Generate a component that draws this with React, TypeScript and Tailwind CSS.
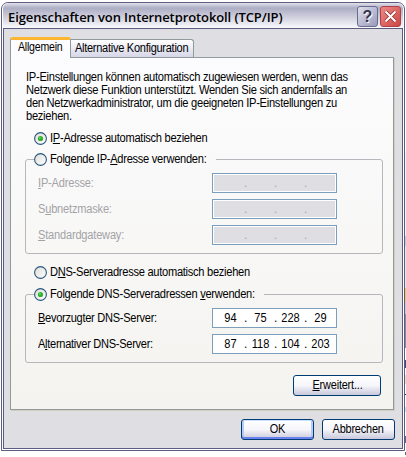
import type { ReactNode } from "react";

function Radio({ checked = false }: { checked?: boolean }) {
  return (
    <svg width="13" height="13" viewBox="0 0 13 13" className="shrink-0">
      <defs>
        <linearGradient id="radioFace" x1="0" y1="0" x2="1" y2="1">
          <stop offset="0" stopColor="#dcdcd7" />
          <stop offset="1" stopColor="#ffffff" />
        </linearGradient>
      </defs>
      <circle cx="6.5" cy="6.5" r="5.9" fill="url(#radioFace)" stroke="#2a567f" strokeWidth="1.1" />
      {checked && <circle cx="6.5" cy="6.5" r="2.6" fill="#2fb02c" />}
      {checked && <circle cx="5.9" cy="5.9" r="0.9" fill="#6bdc63" />}
    </svg>
  );
}

function Option({ checked, className = "", children }: { checked?: boolean; className?: string; children: ReactNode }) {
  return (
    <div className={`flex h-[15px] items-center gap-[3px] ${className}`}>
      <Radio checked={checked} />
      <span className="origin-left scale-x-[0.925]">{children}</span>
    </div>
  );
}

function U({ children }: { children: ReactNode }) {
  return <span className="underline decoration-1 underline-offset-[1px] [text-decoration-skip-ink:none]">{children}</span>;
}

function Address({ parts, disabled }: { parts?: string[]; disabled?: boolean }) {
  const values = parts ?? ["", "", "", ""];
  return (
    <div className={`h-5 w-[125px] border border-[#7b9ebd] bg-white p-px ${disabled ? "text-[#a9a0a8]" : "text-black"}`}>
      <div className={`flex h-full items-center pl-[3px] tracking-normal ${disabled ? "bg-[#dfdfe3]" : ""}`}>
        {values.map((v, i) => (
          <span key={i} className="flex">
            <span className="w-[27px] scale-x-[0.92] text-center">{v}</span>
            {i < 3 && <span className="w-[3px]">.</span>}
          </span>
        ))}
      </div>
    </div>
  );
}

function Row({ label, children }: { label: ReactNode; children: ReactNode }) {
  return (
    <div className="flex h-5 items-center">
      <span className="w-[174px] origin-left">
        <span className="inline-block origin-left scale-x-[0.92]">{label}</span>
      </span>
      {children}
    </div>
  );
}

function Button({ className = "", children }: { className?: string; children: ReactNode }) {
  return (
    <button className={`h-[21px] rounded-[3px] border border-[#003c74] bg-linear-to-b from-white via-[#f6f6fb] to-[#c9c9dc] leading-[19px] tracking-[-0.2px] ${className}`}>
      <span className="inline-block scale-x-[0.91]">{children}</span>
    </button>
  );
}

function DesktopEdge() {
  return (
    <div className="flex w-px flex-col pt-[152px]">
      <div className="h-[84px] bg-[#f4f4f8]" />
      <div className="h-[10px] bg-[#b8cce6]" />
      <div className="h-[42px] bg-[#e8e8ec]" />
      <div className="h-[14px] bg-[#f2c94c]" />
      <div className="h-[12px] bg-[#c8c8d8]" />
      <div className="h-[34px] bg-[#8a8aa8]" />
      <div className="mt-[12px] h-[8px] bg-[#4c4474]" />
      <div className="mt-[7px] h-[9px] bg-[#ecdcae]" />
      <div className="mt-[10px] h-px bg-[#303048]" />
      <div className="mt-[12px] h-[5px] bg-[#b4e4f0]" />
      <div className="mt-[24px] h-[7px] bg-[#6860a0]" />
      <div className="mt-[9px] h-[3px] bg-[#666680]" />
    </div>
  );
}

export default function App() {
  return (
    <div className="flex h-[457px] w-[406px] overflow-hidden bg-white pl-px font-['Liberation_Sans',Arial,sans-serif] text-[12px] leading-[13px] whitespace-nowrap text-black">
      <div className="mt-0.5 flex h-[449px] w-[404px] flex-col rounded-t-[7px] border border-[#5c5c80] bg-white px-px pb-px">
        <header className="flex h-[25px] shrink-0 rounded-t-[6px] bg-linear-to-b from-[#e2e2ec] via-[#adadc4] via-20% to-[#fafafd] pt-[3px] pl-[5px] pr-0.5">
          <h1 className="grow pt-[5px] font-['Open_Sans',sans-serif] text-[13px] font-semibold tracking-[-0.1px]">Eigenschaften von Internetprotokoll (TCP/IP)</h1>
          <div className="flex gap-0.5">
            <div className="flex size-[21px] items-center justify-center rounded-[3px] border border-[#6b6b90] bg-linear-to-br from-[#e0e0ee] to-[#9a9aba]">
              <span className="text-[16px] font-bold text-[#33334f] text-shadow-[1px_1px_0_white]">?</span>
            </div>
            <div className="flex size-[21px] items-center justify-center rounded-[3px] border border-[#b04048] bg-linear-to-br from-[#ea8a86] to-[#cc4444]">
              <svg width="15" height="15" viewBox="0 0 15 15">
                <path d="M2.5 2.5 12.5 12.5M12.5 2.5 2.5 12.5" stroke="#8f3038" strokeWidth="3.4" />
                <path d="M2.5 2.5 12.5 12.5M12.5 2.5 2.5 12.5" stroke="white" strokeWidth="2" />
              </svg>
            </div>
          </div>
        </header>
        <div className="grow border border-[#5c5c80] bg-[#dfdfe3] pt-2 pl-1.5">
          <nav className="flex h-5 items-end">
            <div className="relative z-10 -mb-px flex h-[21px] w-[61px] justify-center rounded-t-[3px] border-x border-t-[3px] border-x-[#919b9c] border-t-[#ffb52e] bg-[#fcfcfe] pt-px">
              <span className="scale-x-[0.88] tracking-[-0.25px]">Allgemein</span>
            </div>
            <div className="flex h-[18px] w-[123px] justify-center rounded-tr-[3px] border-t border-r border-[#919b9c] bg-linear-to-b from-white to-[#d6d6e8] pt-[2px]">
              <span className="scale-x-[0.92] tracking-[-0.3px]">Alternative Konfiguration</span>
            </div>
          </nav>
          <main className="h-[353px] w-[384px] border border-[#919b9c] bg-linear-to-b from-[#fcfcfe] to-[#f4f3ef] pt-[13px] pl-3.5 shadow-[1px_1px_0_#d0cebf]">
            <p className="ml-px h-[60px] origin-left scale-x-[0.928] tracking-[-0.3px]">
              IP-Einstellungen können automatisch zugewiesen werden, wenn das
              <br />
              Netzwerk diese Funktion unterstützt. Wenden Sie sich andernfalls an
              <br />
              den Netzwerkadministrator, um die geeigneten IP-Einstellungen zu
              <br />
              beziehen.
            </p>
            <Option checked className="ml-[9px] tracking-[-0.3px]">
              I<U>P</U>-Adresse automatisch beziehen
            </Option>
            <fieldset className="mt-1.5 h-[102px] w-[358px] rounded-[3px] border border-[#b9b5bd] pl-3">
              <legend className="-ml-1 w-[182px]">
                <Option className="tracking-[-0.3px]">
                  Folgende IP-<U>A</U>dresse verwenden:
                </Option>
              </legend>
              <div className="mt-1.5 flex flex-col gap-1.5 tracking-[-0.2px] text-[#a3a3a6]">
                <Row label={<><U>I</U>P-Adresse:</>}><Address disabled /></Row>
                <Row label={<>S<U>u</U>bnetzmaske:</>}><Address disabled /></Row>
                <Row label={<><U>S</U>tandardgateway:</>}><Address disabled /></Row>
              </div>
            </fieldset>
            <Option className="mt-[11px] ml-[9px] tracking-[-0.3px]">
              D<U>N</U>S-Serveradresse automatisch beziehen
            </Option>
            <fieldset className="mt-[7px] h-[76px] w-[358px] rounded-[3px] border border-[#b9b5bd] pl-3">
              <legend className="-ml-1 w-[230px]">
                <Option checked className="tracking-[-0.3px]">
                  Folgende DNS-Serveradressen <U>v</U>erwenden:
                </Option>
              </legend>
              <div className="mt-1.5 flex flex-col gap-1.5 tracking-[-0.3px]">
                <Row label={<><U>B</U>evorzugter DNS-Server:</>}><Address parts={["94", "75", "228", "29"]} /></Row>
                <Row label={<>A<U>l</U>ternativer DNS-Server:</>}><Address parts={["87", "118", "104", "203"]} /></Row>
              </div>
            </fieldset>
            <Button className="mt-3 ml-[268px] w-[88px]">
              <U>E</U>rweitert...
            </Button>
          </main>
          <footer className="mt-[9px] flex gap-2 pl-[231px]">
            <Button className="w-[73px] shadow-[inset_0_1px_0_#cee0ff,inset_0_-2px_0_#6982ee,inset_2px_0_0_#b5cbf5,inset_-2px_0_0_#b5cbf5]">OK</Button>
            <Button className="w-[73px]">Abbrechen</Button>
          </footer>
        </div>
      </div>
      <DesktopEdge />
    </div>
  );
}
